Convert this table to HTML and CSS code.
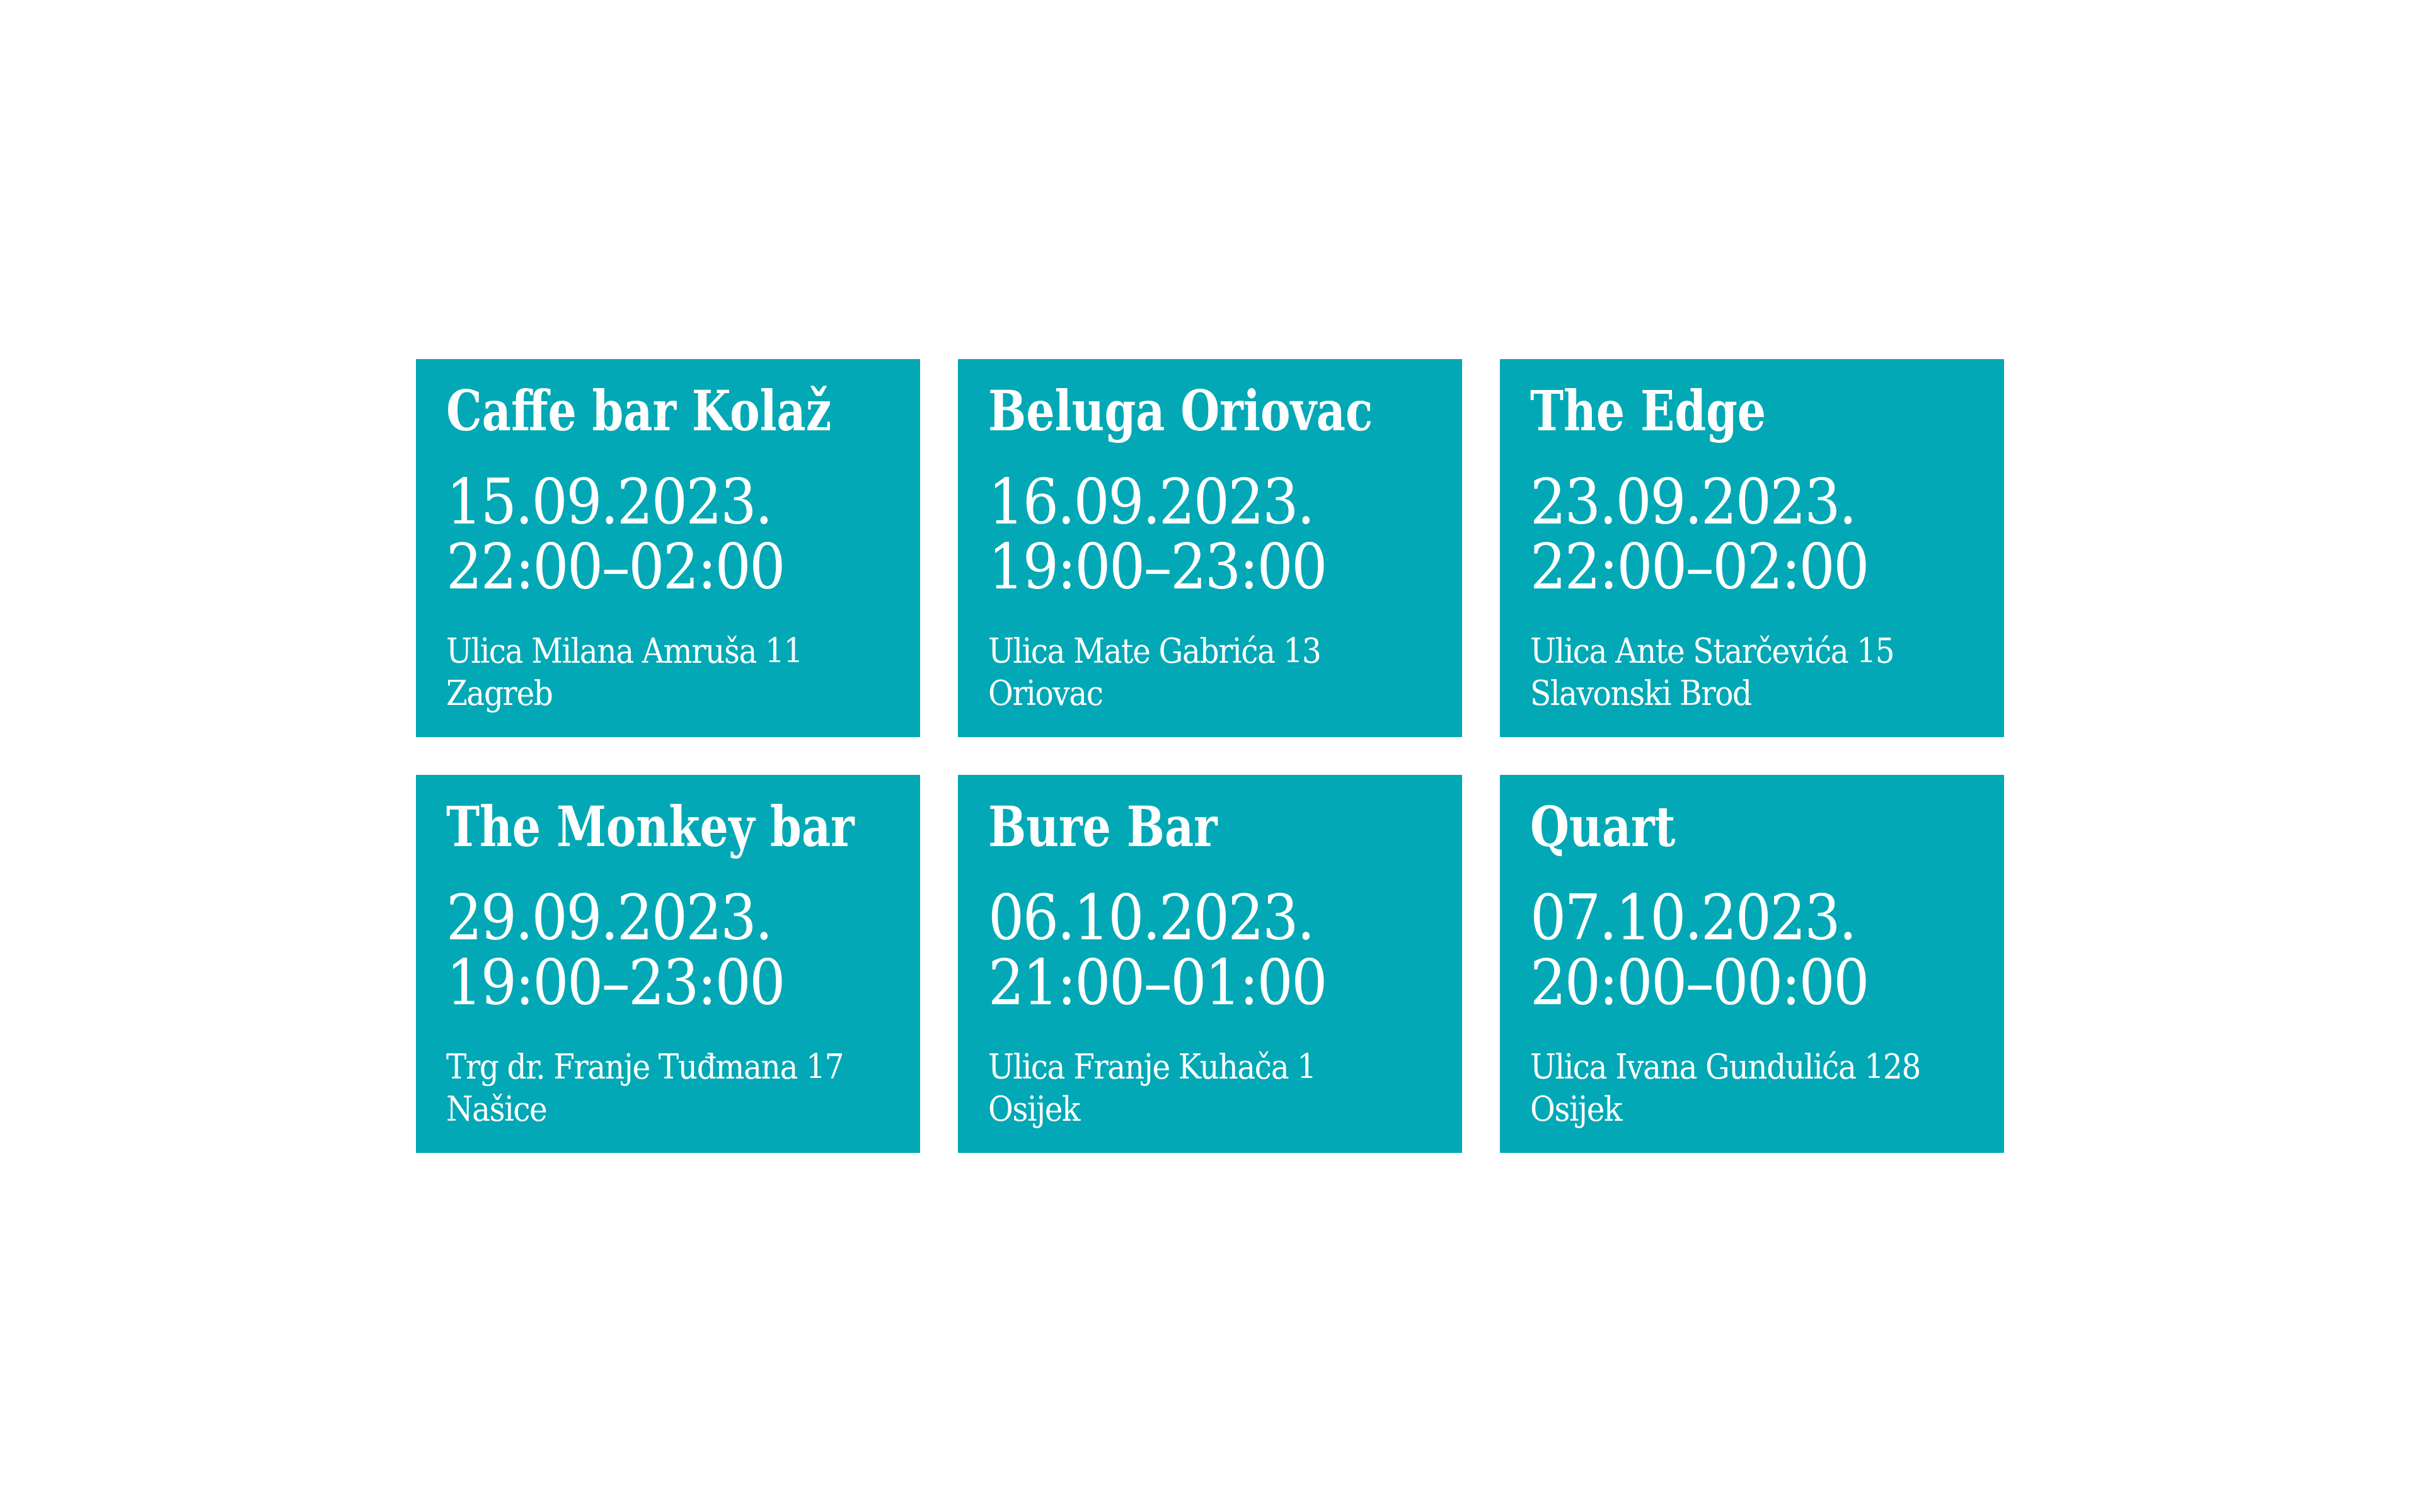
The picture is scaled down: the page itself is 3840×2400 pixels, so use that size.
FILE: index.html
```html
<!DOCTYPE html>
<html lang="hr">
<head>
    <meta charset="UTF-8">
    <meta name="viewport" content="width=device-width, initial-scale=1.0">
    <title>Termini</title>
    <link rel="stylesheet" href="styles.css">
</head>
<body>
    <div class="page">
        <div class="events">
            <div class="event">
                <h2 class="venue">Caffe bar Kolaž</h2>
                <p class="when">15.09.2023.<br>22:00–02:00</p>
                <p class="where">Ulica Milana Amruša 11<br>Zagreb</p>
            </div>
            <div class="event">
                <h2 class="venue">Beluga Oriovac</h2>
                <p class="when">16.09.2023.<br>19:00–23:00</p>
                <p class="where">Ulica Mate Gabrića 13<br>Oriovac</p>
            </div>
            <div class="event">
                <h2 class="venue">The Edge</h2>
                <p class="when">23.09.2023.<br>22:00–02:00</p>
                <p class="where">Ulica Ante Starčevića 15<br>Slavonski Brod</p>
            </div>
            <div class="event">
                <h2 class="venue">The Monkey bar</h2>
                <p class="when">29.09.2023.<br>19:00–23:00</p>
                <p class="where">Trg dr. Franje Tuđmana 17<br>Našice</p>
            </div>
            <div class="event">
                <h2 class="venue">Bure Bar</h2>
                <p class="when">06.10.2023.<br>21:00–01:00</p>
                <p class="where">Ulica Franje Kuhača 1<br>Osijek</p>
            </div>
            <div class="event">
                <h2 class="venue">Quart</h2>
                <p class="when">07.10.2023.<br>20:00–00:00</p>
                <p class="where">Ulica Ivana Gundulića 128<br>Osijek</p>
            </div>
        </div>
    </div>
</body>
</html>
```

FILE: styles.css
```css
body {
    margin: 0;
    background: #fff;
    font-family: "DejaVu Serif Condensed", "DejaVu Serif", serif;
    font-stretch: condensed;
    color: #fff;
}

.page {
    min-height: 100vh;
    display: flex;
    align-items: center;
    justify-content: center;
}

.events {
    display: grid;
    grid-template-columns: repeat(3, 800px);
    gap: 60px;
}

.event {
    height: 600px;
    box-sizing: border-box;
    padding: 30px 48px 0 48px;
    background: #02a8b5;
    display: flex;
    flex-direction: column;
}

/* titles are narrower still than the condensed face */
.venue {
    margin: 0;
    font-size: 88px;
    line-height: 1.2;
    font-weight: bold;
    white-space: nowrap;
    transform: scaleX(0.9);
    transform-origin: left center;
}

.when {
    margin: 39px 0 0 0;
    font-size: 100px;
    line-height: 103px;
    letter-spacing: -2.5px;
    white-space: nowrap;
}

.where {
    margin: 49px 0 0 0;
    font-size: 54px;
    line-height: 67px;
    letter-spacing: -1.4px;
    white-space: nowrap;
}
```
